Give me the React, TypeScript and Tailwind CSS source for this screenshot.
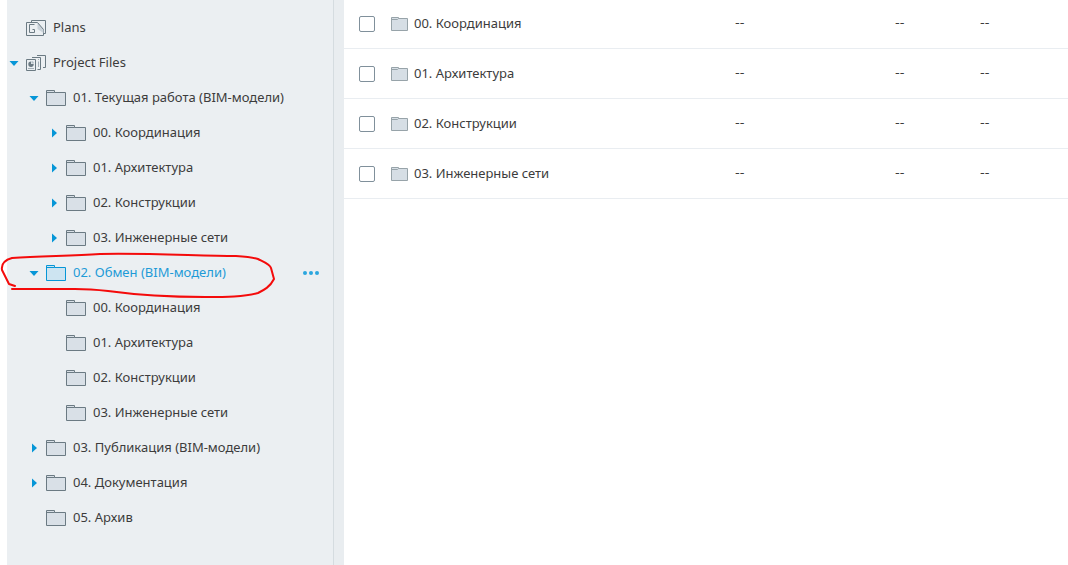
import { useState } from 'react'

type IconKind = 'plans' | 'files' | 'folder'

interface TreeNode {
  id: string
  label: string
  level: 0 | 1 | 2
  icon: IconKind
  arrow?: 'open' | 'closed'
}

const TREE: TreeNode[] = [
  { id: 'plans', label: 'Plans', level: 0, icon: 'plans' },
  { id: 'files', label: 'Project Files', level: 0, icon: 'files', arrow: 'open' },
  { id: '01', label: '01. Текущая работа (BIM-модели)', level: 1, icon: 'folder', arrow: 'open' },
  { id: '01-00', label: '00. Координация', level: 2, icon: 'folder', arrow: 'closed' },
  { id: '01-01', label: '01. Архитектура', level: 2, icon: 'folder', arrow: 'closed' },
  { id: '01-02', label: '02. Конструкции', level: 2, icon: 'folder', arrow: 'closed' },
  { id: '01-03', label: '03. Инженерные сети', level: 2, icon: 'folder', arrow: 'closed' },
  { id: '02', label: '02. Обмен (BIM-модели)', level: 1, icon: 'folder', arrow: 'open' },
  { id: '02-00', label: '00. Координация', level: 2, icon: 'folder' },
  { id: '02-01', label: '01. Архитектура', level: 2, icon: 'folder' },
  { id: '02-02', label: '02. Конструкции', level: 2, icon: 'folder' },
  { id: '02-03', label: '03. Инженерные сети', level: 2, icon: 'folder' },
  { id: '03', label: '03. Публикация (BIM-модели)', level: 1, icon: 'folder', arrow: 'closed' },
  { id: '04', label: '04. Документация', level: 1, icon: 'folder', arrow: 'closed' },
  { id: '05', label: '05. Архив', level: 1, icon: 'folder' },
]

const ROWS = ['00. Координация', '01. Архитектура', '02. Конструкции', '03. Инженерные сети']

const INDENT = { 0: 'pl-0', 1: 'pl-5', 2: 'pl-10' }

const MARKED_ID = '02'

function FolderIcon({ active }: { active?: boolean }) {
  return (
    <svg width="20" height="16" viewBox="0 0 20 16" fill={active ? '#cde4f1' : '#d9e0e7'} stroke={active ? '#0696d7' : '#6b7a83'}>
      <path d="M.5 15.500V.5H8.500V2.500H19.500V15.500Z" />
      <path d="M1 2.500H8.500" fill="none" />
    </svg>
  )
}

function SmallFolderIcon() {
  return (
    <svg className="mt-[2px]" width="17" height="14" viewBox="0 0 17 14" fill="#d6dee5" stroke="#97a3a9">
      <path d="M.5 13.500V.5H7.500V1.500H16.500V13.500Z" />
      <path d="M1 2.500H6.500L7.500 1.500" fill="none" />
    </svg>
  )
}

function PlansIcon() {
  return (
    <svg width="20" height="16" viewBox="0 0 20 16" fill="none" stroke="#6b7a83">
      <path d="M5.500 2.500V.5H19.500V13.500H18" />
      <path d="M11.500 2.500H.5V15.500H17.500V9.500" />
      <path d="M11.500 2.500V9L17.500 13V9.500Z" fill="#c9d2d9" stroke="none" />
      <path d="M11.500 2.500L17.500 9.500" />
      <path d="M8.500 4.500H3.500V12.500H8.500V9.500H6.500" />
    </svg>
  )
}

function FilesIcon() {
  return (
    <svg width="20" height="16" viewBox="0 0 20 16" fill="none" stroke="#6b7a83">
      <path d="M11 .5H19.500V12.500H17" />
      <path d="M6 2.500H14.500V14.500H11.500" />
      <path d="M.5 4.500H9.500V15.500H.5Z" />
      <path d="M5 9V6.500A2.700 2.700 0 1 0 7.700 9Z" fill="#6b7a83" stroke="none" />
      <path d="M5.500 8.500V6A2.500 2.500 0 0 1 8 8.500Z" fill="#b4bfc6" stroke="none" />
      <path d="M2 13.500H8M12.500 4V5M12.500 6.500V12" stroke="#a3afb7" />
    </svg>
  )
}

function NodeIcon({ kind, active }: { kind: IconKind; active: boolean }) {
  if (kind === 'plans') return <PlansIcon />
  if (kind === 'files') return <FilesIcon />
  return <FolderIcon active={active} />
}

function Arrow({ open }: { open: boolean }) {
  return (
    <svg width="10" height="10" viewBox="0 0 10 10" fill="#0696d7">
      <path d={open ? 'M.5 3H9.500L5 8Z' : 'M3 .5V9.500L8 5Z'} />
    </svg>
  )
}

// Red pen stroke around the marked folder
function PenMark() {
  return (
    <svg
      className="pointer-events-none absolute -left-[7px] -top-[3px]"
      width="278"
      height="48"
      viewBox="0 0 278 48"
      fill="none"
      stroke="#f40b0b"
      strokeWidth="2"
      strokeLinecap="round"
      strokeLinejoin="round"
    >
      <path d="M15 34L9 32L6 26L2 18C1 12 5 8 12 6C40 4 70 4 100 2C150 1 200 4 236 4Q252 5 258 7C264 10 270 12 271 16L274 27C270 35 264 38 258 41C245 45 225 45 205 45C170 45 130 42 108 39Q90 37 75 37H12" />
    </svg>
  )
}

export default function App() {
  const [selected, setSelected] = useState('02')

  return (
    <div className="flex min-h-screen bg-white pl-[7px] font-['Noto_Sans','Open_Sans',sans-serif] text-[13px] leading-5 text-[#3c3c3c]">
      <nav className="w-[327px] shrink-0 border-r border-[#d5dce0] bg-[#ebeff2] pt-[10px]">
        <ul>
          {TREE.map((node) => {
            const active = node.id === selected
            return (
              <li key={node.id} className={`relative flex h-[35px] items-center pr-3 ${INDENT[node.level]}`}>
                <button
                  type="button"
                  onClick={() => setSelected(node.id)}
                  className={`flex flex-1 items-center pl-[2px] text-left ${active ? 'text-[#1f9bd7]' : ''}`}
                >
                  <span className="mr-[7px] size-[10px]">
                    {node.arrow && <Arrow open={node.arrow === 'open'} />}
                  </span>
                  <NodeIcon kind={node.icon} active={active} />
                  <span className="ml-[7px] whitespace-nowrap pb-[2px]">{node.label}</span>
                </button>
                {active && (
                  <button type="button" aria-label="More" className="flex gap-[2px] p-[2px]">
                    <span className="size-[4px] rounded-full bg-[#2ba6de]" />
                    <span className="size-[4px] rounded-full bg-[#2ba6de]" />
                    <span className="size-[4px] rounded-full bg-[#2ba6de]" />
                  </button>
                )}
                {node.id === MARKED_ID && <PenMark />}
              </li>
            )
          })}
        </ul>
      </nav>
      <div className="w-[10px] shrink-0 bg-[#e9edf0]" />

      <main className="min-w-0 flex-1">
        <table className="-mt-[2px] w-full table-fixed">
          <colgroup>
            <col className="w-[47px]" />
            <col />
            <col className="w-[160px]" />
            <col className="w-[85px]" />
            <col className="w-[88px]" />
          </colgroup>
          <tbody>
            {ROWS.map((name) => (
              <tr key={name} className="h-[50px] border-b border-[#e9edf1]">
                <td className="pl-[15px] pt-[2px]">
                  <input
                    type="checkbox"
                    aria-label={name}
                    className="block size-4 appearance-none rounded-[2px] border border-[#80909b] bg-white checked:bg-[#0696d7]"
                  />
                </td>
                <td>
                  <a href="#" className="flex items-center gap-[6px]">
                    <SmallFolderIcon />
                    {name}
                  </a>
                </td>
                <td className="font-['DejaVu_Sans',sans-serif]">--</td>
                <td className="font-['DejaVu_Sans',sans-serif]">--</td>
                <td className="font-['DejaVu_Sans',sans-serif]">--</td>
              </tr>
            ))}
          </tbody>
        </table>
      </main>
    </div>
  )
}
